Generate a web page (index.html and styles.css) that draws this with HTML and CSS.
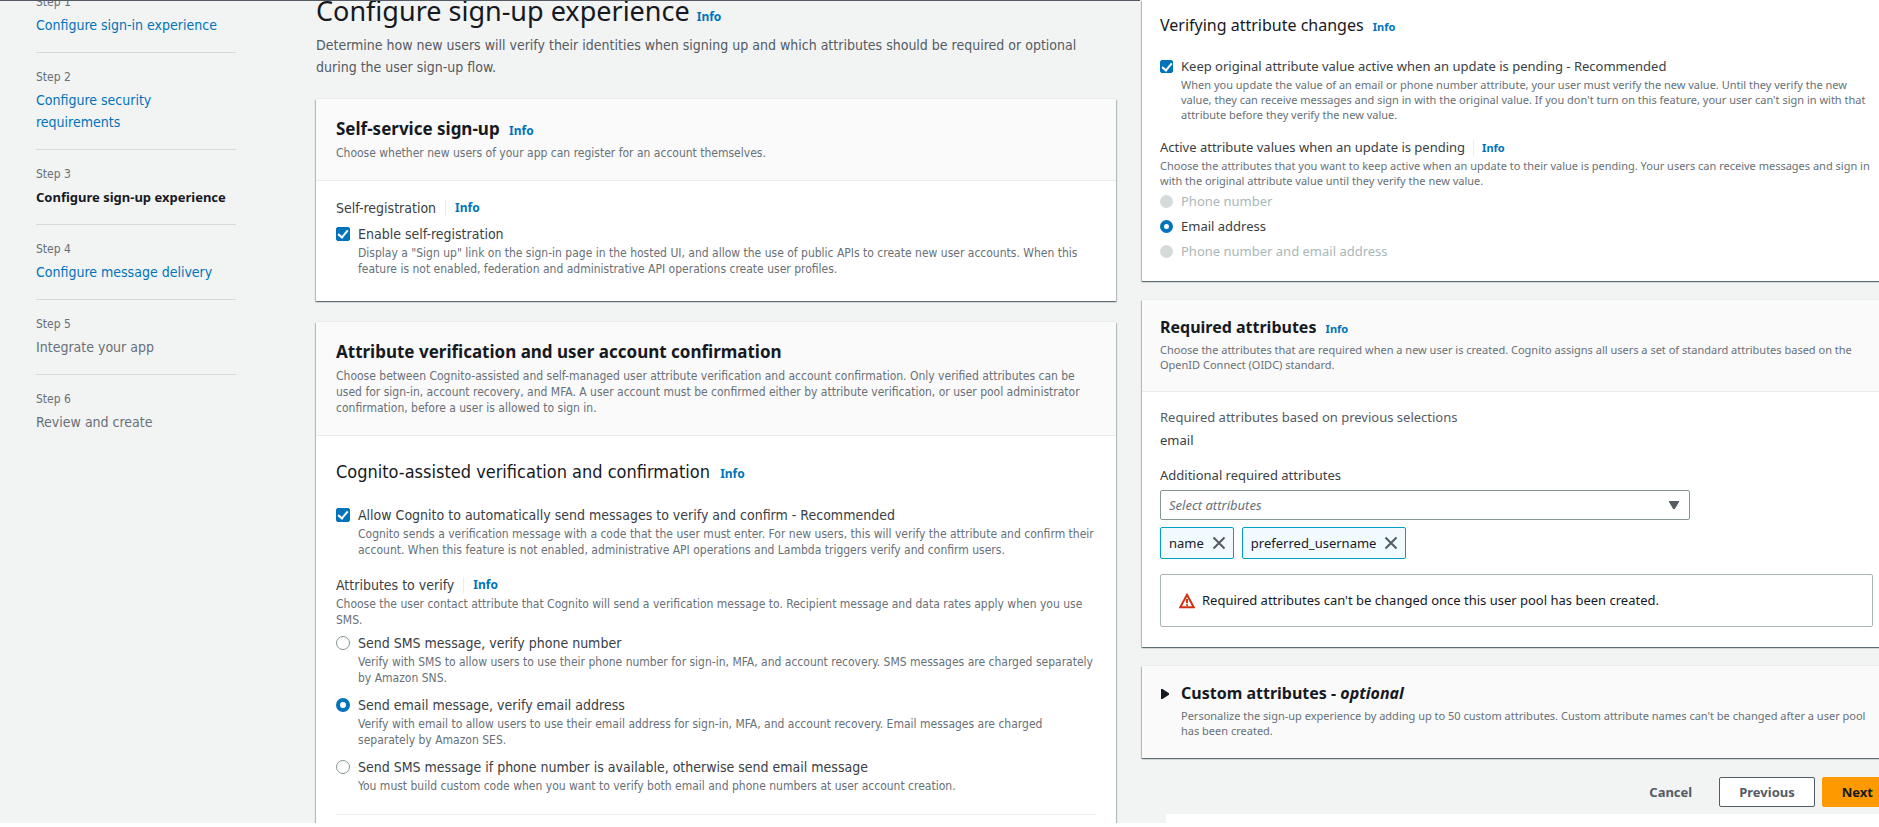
FILE: index.html
```html
<!DOCTYPE html>
<html lang="en">
<head>
<meta charset="utf-8">
<title>Configure sign-up experience</title>
<link rel="stylesheet" href="styles.css">
</head>
<body>
<div class="page">
  <div class="pane pane-left">
    <nav class="steps" aria-label="Steps">
      <ol class="step-list">
        <li class="step"><span class="step-label">Step 1</span><a class="step-title" href="#">Configure sign-in experience</a></li>
        <li class="step"><span class="step-label">Step 2</span><a class="step-title" href="#">Configure security<br>requirements</a></li>
        <li class="step"><span class="step-label">Step 3</span><span class="step-title current">Configure sign-up experience</span></li>
        <li class="step"><span class="step-label">Step 4</span><a class="step-title" href="#">Configure message delivery</a></li>
        <li class="step"><span class="step-label">Step 5</span><span class="step-title">Integrate your app</span></li>
        <li class="step"><span class="step-label">Step 6</span><span class="step-title">Review and create</span></li>
      </ol>
    </nav>
    <main class="main">
      <header class="page-head">
        <h1 class="page-title">Configure sign-up experience <a class="info" href="#">Info</a></h1>
        <p class="page-desc">Determine how new users will verify their identities when signing up and which attributes should be required or optional<br>during the user sign-up flow.</p>
      </header>

      <section class="card">
        <header class="card-head">
          <h2 class="card-title">Self-service sign-up <a class="info" href="#">Info</a></h2>
          <p class="desc">Choose whether new users of your app can register for an account themselves.</p>
        </header>
        <div class="card-body">
          <div class="field-label"><span class="field-name">Self-registration</span><a class="info" href="#">Info</a></div>
          <div class="choice-list">
            <div class="choice">
              <input class="check" type="checkbox" id="self-reg" checked>
              <label class="choice-label" for="self-reg">Enable self-registration</label>
              <p class="desc choice-desc">Display a "Sign up" link on the sign-in page in the hosted UI, and allow the use of public APIs to create new user accounts. When this<br>feature is not enabled, federation and administrative API operations create user profiles.</p>
            </div>
          </div>
        </div>
      </section>

      <section class="card">
        <header class="card-head">
          <h2 class="card-title">Attribute verification and user account confirmation</h2>
          <p class="desc">Choose between Cognito-assisted and self-managed user attribute verification and account confirmation. Only verified attributes can be<br>used for sign-in, account recovery, and MFA. A user account must be confirmed either by attribute verification, or user pool administrator<br>confirmation, before a user is allowed to sign in.</p>
        </header>
        <div class="card-body">
          <h3 class="sub-title">Cognito-assisted verification and confirmation <a class="info" href="#">Info</a></h3>
          <div class="choice">
            <input class="check" type="checkbox" id="assist" checked>
            <label class="choice-label" for="assist">Allow Cognito to automatically send messages to verify and confirm - Recommended</label>
            <p class="desc choice-desc">Cognito sends a verification message with a code that the user must enter. For new users, this will verify the attribute and confirm their<br>account. When this feature is not enabled, administrative API operations and Lambda triggers verify and confirm users.</p>
          </div>
          <div class="group" role="radiogroup" aria-labelledby="verify-name">
            <div class="field-label"><span class="field-name" id="verify-name">Attributes to verify</span><a class="info" href="#">Info</a></div>
            <p class="desc">Choose the user contact attribute that Cognito will send a verification message to. Recipient message and data rates apply when you use<br>SMS.</p>
            <div class="choice-list">
              <div class="choice">
                <input class="radio" type="radio" name="verify" id="v-sms">
                <label class="choice-label" for="v-sms">Send SMS message, verify phone number</label>
                <p class="desc choice-desc">Verify with SMS to allow users to use their phone number for sign-in, MFA, and account recovery. SMS messages are charged separately<br>by Amazon SNS.</p>
              </div>
              <div class="choice">
                <input class="radio" type="radio" name="verify" id="v-email" checked>
                <label class="choice-label" for="v-email">Send email message, verify email address</label>
                <p class="desc choice-desc">Verify with email to allow users to use their email address for sign-in, MFA, and account recovery. Email messages are charged<br>separately by Amazon SES.</p>
              </div>
              <div class="choice">
                <input class="radio" type="radio" name="verify" id="v-both">
                <label class="choice-label" for="v-both">Send SMS message if phone number is available, otherwise send email message</label>
                <p class="desc choice-desc">You must build custom code when you want to verify both email and phone numbers at user account creation.</p>
              </div>
            </div>
          </div>
          <hr class="rule">
        </div>
      </section>
    </main>
  </div>

  <div class="pane pane-right">
    <section class="card card-open">
      <div class="card-body">
        <h3 class="sub-title">Verifying attribute changes <a class="info" href="#">Info</a></h3>
        <div class="choice">
          <input class="check" type="checkbox" id="keep" checked>
          <label class="choice-label" for="keep">Keep original attribute value active when an update is pending - Recommended</label>
          <p class="desc choice-desc">When you update the value of an email or phone number attribute, your user must verify the new value. Until they verify the new<br>value, they can receive messages and sign in with the original value. If you don't turn on this feature, your user can't sign in with that<br>attribute before they verify the new value.</p>
        </div>
        <div class="group" role="radiogroup" aria-labelledby="active-name">
          <div class="field-label"><span class="field-name" id="active-name">Active attribute values when an update is pending</span><a class="info" href="#">Info</a></div>
          <p class="desc">Choose the attributes that you want to keep active when an update to their value is pending. Your users can receive messages and sign in<br>with the original attribute value until they verify the new value.</p>
          <div class="choice-list">
            <div class="choice">
              <input class="radio" type="radio" name="active" id="a-phone" disabled>
              <label class="choice-label" for="a-phone">Phone number</label>
            </div>
            <div class="choice">
              <input class="radio" type="radio" name="active" id="a-email" checked>
              <label class="choice-label" for="a-email">Email address</label>
            </div>
            <div class="choice">
              <input class="radio" type="radio" name="active" id="a-both" disabled>
              <label class="choice-label" for="a-both">Phone number and email address</label>
            </div>
          </div>
        </div>
      </div>
    </section>

    <section class="card">
      <header class="card-head">
        <h2 class="card-title">Required attributes <a class="info" href="#">Info</a></h2>
        <p class="desc">Choose the attributes that are required when a new user is created. Cognito assigns all users a set of standard attributes based on the<br>OpenID Connect (OIDC) standard.</p>
      </header>
      <div class="card-body">
        <dl class="pair">
          <dt class="pair-key">Required attributes based on previous selections</dt>
          <dd class="pair-value">email</dd>
        </dl>
        <label class="select-label" for="attrs">Additional required attributes</label>
        <div class="select-wrap">
          <select class="select" id="attrs"><option>Select attributes</option></select>
          <svg class="select-arrow" viewBox="0 0 10 8" aria-hidden="true"><path d="M0 0h10v1L5.800 8H4.200L0 1z"/></svg>
        </div>
        <div class="tokens">
          <span class="token">name<button class="token-x" type="button" aria-label="Remove name"><svg viewBox="0 0 14 14"><path d="M1.500 1.500l11 11M12.500 1.500l-11 11"/></svg></button></span>
          <span class="token">preferred_username<button class="token-x" type="button" aria-label="Remove preferred_username"><svg viewBox="0 0 14 14"><path d="M1.500 1.500l11 11M12.500 1.500l-11 11"/></svg></button></span>
        </div>
        <div class="alert" role="note">
          <svg class="alert-icon" viewBox="0 0 16 16" aria-hidden="true"><path d="M8 1.800L14.700 14.200H1.300z"/><path d="M8 6v4.300M8 11.200v1.600"/></svg>
          <span>Required attributes can't be changed once this user pool has been created.</span>
        </div>
      </div>
    </section>

    <section class="card card-collapsed">
      <svg class="caret" viewBox="0 0 8 10" aria-hidden="true"><path d="M0 0h1.500L8 4.300v1.400L1.500 10H0z"/></svg>
      <div>
        <h2 class="card-title">Custom attributes - <em>optional</em></h2>
        <p class="desc">Personalize the sign-up experience by adding up to 50 custom attributes. Custom attribute names can't be changed after a user pool<br>has been created.</p>
      </div>
    </section>

    <div class="actions">
      <button class="btn btn-link" type="button">Cancel</button>
      <button class="btn btn-normal" type="button">Previous</button>
      <button class="btn btn-primary" type="button">Next</button>
    </div>
    <div class="sheet"></div>
  </div>
</div>
</body>
</html>
```
FILE: styles.css
```css
*, *::before, *::after { box-sizing: border-box; }

body {
  margin: 0;
  background: #fff;
  color: #3a3e45;
  font-family: "Noto Sans", "Open Sans", sans-serif;
  overflow: hidden;
}

h1, h2, h3, p, dl, dd, ol { margin: 0; padding: 0; }
a { text-decoration: none; }

.page {
  display: grid;
  grid-template-columns: minmax(0, 1140fr) minmax(0, 739fr);
  height: calc(100vh - 4px);
  background: #f2f3f3;
  overflow: hidden;
}

.pane {
  --text: 14px;
  --small: 12px;
  --small-line: 16px;
  --title: 17px;
  --pad: 20px;
  --control: 14px;
  --indent: 8px;
  font-size: var(--text);
  line-height: 22px;
  white-space: nowrap;
}

.pane-left {
  display: flex;
  align-items: flex-start;
  gap: 80px;
  padding: 0 24px 0 36px;
  border-top: 1px solid #545b64;
  font-family: "DejaVu Sans Condensed", "Noto Sans", sans-serif;
  overflow: hidden;
}

.pane-right {
  --text: 13px;
  --small: 11px;
  --small-line: 15px;
  --title: 16px;
  --pad: 18px;
  --control: 13px;
  padding-left: 2px;
  line-height: 21px;
}

/* Step navigation */
.steps { flex: 0 0 200px; min-width: 0; margin-top: -23px; }
.step-list { list-style: none; }
.step { display: flex; flex-direction: column; gap: 3px; padding: 15px 0 16px; border-bottom: 1px solid #d5dbdb; }
.step:last-child { border-bottom: 0; }
.step-label { font-size: var(--small); line-height: 18px; color: #687078; }
.step-title { color: #687078; }
a.step-title, .info { color: #0073bb; }
.step-title.current { color: #16191f; font-size: 13px; font-weight: 700; }
h1, h2, .info, .step-title.current { font-family: "Noto Sans", "Open Sans", sans-serif; }

/* Page heading */
.main { flex: 1; min-width: 0; }
.page-head { margin-top: -8px; padding-bottom: 21px; color: #545b64; }
.page-title { font-size: 27px; line-height: 36px; font-weight: 400; color: #16191f; }
.page-desc { padding-top: 5px; }
.info { font-size: var(--small); line-height: 16px; font-weight: 700; margin-left: 5px; }
.page-title .info { margin-left: 0; }

/* Cards */
.card {
  background: #fff;
  box-shadow:
    0 -1px 0 0 #eaeded,
    0 1px 1px 0 rgba(0, 28, 36, 0.4),
    1px 1px 1px 0 rgba(0, 28, 36, 0.2),
    -1px 1px 1px 0 rgba(0, 28, 36, 0.2);
  margin-bottom: 21px;
}
.card-head {
  padding: 18px var(--pad) 19px;
  background: #fafafa;
  border-bottom: 1px solid #eaeded;
}
.card-title { font-size: var(--title); line-height: 24px; font-weight: 700; color: #16191f; padding-bottom: 4px; }
.card-body { padding: 16px var(--pad) 24px; }
.desc { font-size: var(--small); line-height: var(--small-line); color: #687078; }
.sub-title { font-size: 18px; line-height: 24px; font-weight: 400; color: #16191f; padding: 8px 0 20px; }

.field-label { display: flex; align-items: center; gap: 9px; }
.field-label .info { margin: 0; padding-left: 9px; border-left: 1px solid #eaeded; }
.group { padding-top: 16px; }

.choice { display: grid; grid-template-columns: var(--control) 1fr; column-gap: var(--indent); align-items: center; }
.choice-desc { grid-column: 2; }
.choice-list { display: grid; gap: 8px; padding-top: 4px; }

.check, .radio {
  appearance: none;
  display: grid;
  place-items: center;
  width: var(--control);
  height: var(--control);
  margin: 0;
  border: 1px solid #879596;
  background: #fff;
}
.check { border-radius: 2px; }
.radio { border-radius: 50%; }
.check:checked { background: #0073bb; border-color: #0073bb; }
.check:checked::after {
  content: "";
  width: 6px;
  height: 10px;
  margin-bottom: 2px;
  border: solid #fff;
  border-width: 0 2px 2px 0;
  transform: rotate(40deg);
}
.radio:checked { border: 4px solid #0073bb; }
.radio:disabled { background: #d5dbdb; border-color: #d5dbdb; }
.radio:disabled + .choice-label { color: #aab7b8; }
.rule { margin: 20px 0 0; border: 0; border-top: 1px solid #eaeded; }

/* Right pane */
.pane-right .card { margin-right: -12px; margin-bottom: 19px; }
.pane-right .card-title { padding-bottom: 3px; }
.pane-right .sub-title { padding: 0 0 19px; font-size: 16px; }
.pane-right .card-body { padding-top: 15px; padding-bottom: 20px; }
.pane-right .card-open .card-body { padding-top: 13px; padding-bottom: 19px; }
.pane-right .card-head { padding: 15px var(--pad) 19px; }
.pane-right .group { padding-top: 15px; }
.pane-right .choice-list { gap: 4px; padding-top: 3px; }
.pane-right .field-label { gap: 8px; }
.pane-right .field-label .info { padding-left: 8px; }

.pair-key { color: #545b64; }
.pair-value { padding: 2px 0 14px; }
.select-label { display: block; padding-bottom: 4px; }
.select-wrap { display: grid; align-items: center; width: 530px; }
.select, .select-arrow { grid-area: 1 / 1; }
.select {
  appearance: none;
  height: 30px;
  padding: 0 8px;
  border: 1px solid #879596;
  border-radius: 2px;
  background: #fff;
  color: #687078;
  font: italic 13px "Noto Sans", "Open Sans", sans-serif;
}
.select-arrow { justify-self: end; width: 10px; height: 8px; margin-right: 11px; fill: #545b64; pointer-events: none; }

.tokens { display: flex; gap: 8px; padding-top: 7px; }
.token {
  display: flex;
  align-items: center;
  gap: 8px;
  height: 32px;
  padding: 0 7px 0 8px;
  border: 1px solid #00a1c9;
  border-radius: 2px;
  background: #f1faff;
  color: #16191f;
}
.token-x { display: flex; padding: 0; border: 0; background: none; }
.token-x svg { width: 14px; height: 14px; fill: none; stroke: #545b64; stroke-width: 2; }

.alert {
  display: flex;
  align-items: center;
  gap: 7px;
  margin-top: 15px;
  padding: 15px 18px;
  border: 1px solid #aab7b8;
  border-radius: 2px;
  color: #16191f;
}
.alert-icon { width: 16px; height: 16px; fill: none; stroke: #d13212; stroke-width: 2; }

.card-collapsed { display: flex; gap: 12px; padding: 15px 19px 20px; background: #fafafa; }
.caret { flex: none; width: 8px; height: 10px; margin-top: 8px; fill: #16191f; }

.actions { display: flex; justify-content: flex-end; gap: 7px; margin-right: -14px; }
.btn {
  height: 30px;
  padding: 0 19px;
  border: 1px solid transparent;
  border-radius: 2px;
  background: none;
  color: #545b64;
  font: 700 13px "Noto Sans", "Open Sans", sans-serif;
}
.btn-normal { background: #fff; border-color: #545b64; }
.btn-primary { background: #f90; border-color: #f90; color: #16191f; }
.sheet { height: 20px; margin: 7px 0 0 24px; background: #fff; }
```
